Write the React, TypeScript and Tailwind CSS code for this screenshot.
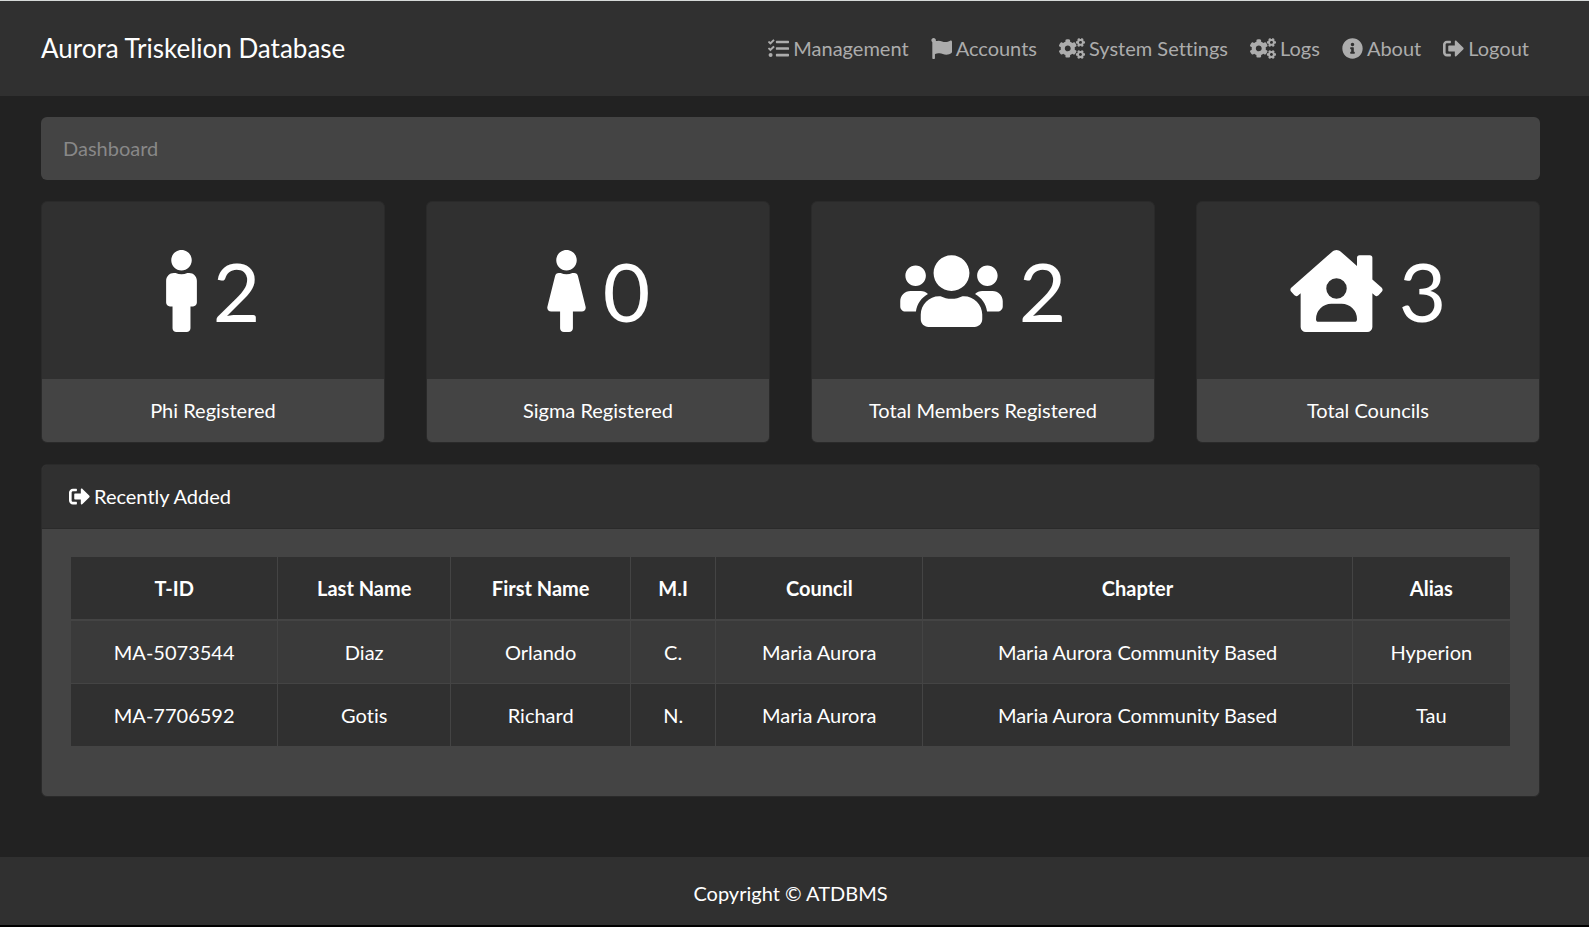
import type { IconType } from "react-icons";
import {
  FaCogs,
  FaFemale,
  FaFlag,
  FaHouseUser,
  FaInfoCircle,
  FaMale,
  FaSignOutAlt,
  FaTasks,
  FaUsers,
} from "react-icons/fa";

type Link = { label: string; icon: IconType; width: string };
type Stat = { label: string; value: number; icon: IconType; width: string };

const links: Link[] = [
  { label: "Management", icon: FaTasks, width: "w-[21px]" },
  { label: "Accounts", icon: FaFlag, width: "w-[21px]" },
  { label: "System Settings", icon: FaCogs, width: "w-[26px]" },
  { label: "Logs", icon: FaCogs, width: "w-[26px]" },
  { label: "About", icon: FaInfoCircle, width: "w-[21px]" },
  { label: "Logout", icon: FaSignOutAlt, width: "w-[21px]" },
];

const stats: Stat[] = [
  { label: "Phi Registered", value: 2, icon: FaMale, width: "w-[31px]" },
  { label: "Sigma Registered", value: 0, icon: FaFemale, width: "w-[41px]" },
  { label: "Total Members Registered", value: 2, icon: FaUsers, width: "w-[103px]" },
  { label: "Total Councils", value: 3, icon: FaHouseUser, width: "w-[93px]" },
];

const columns = [
  { name: "T-ID", width: "w-[14.4%]" },
  { name: "Last Name", width: "w-[12%]" },
  { name: "First Name", width: "w-[12.5%]" },
  { name: "M.I", width: "w-[5.9%]" },
  { name: "Council", width: "w-[14.4%]" },
  { name: "Chapter", width: "w-[29.8%]" },
  { name: "Alias", width: "w-[11%]" },
];

const members = [
  ["MA-5073544", "Diaz", "Orlando", "C.", "Maria Aurora", "Maria Aurora Community Based", "Hyperion"],
  ["MA-7706592", "Gotis", "Richard", "N.", "Maria Aurora", "Maria Aurora Community Based", "Tau"],
];

function NavBar() {
  return (
    <header className="flex flex-wrap items-center justify-between border-t border-[#d5d9d8] bg-[#303030] py-8 pr-[60px] pl-[41px]">
      <a href="#" className="text-[26px] leading-[31px]">
        Aurora Triskelion Database
      </a>
      <nav className="flex flex-wrap items-center gap-[22px] text-[#acacac]">
        {links.map(({ label, icon: Icon, width }) => (
          <a key={label} href="#" className="flex items-center gap-1">
            <Icon className={`h-[21px] ${width}`} />
            {label}
          </a>
        ))}
      </nav>
    </header>
  );
}

function StatCard({ label, value, icon: Icon, width }: Stat) {
  return (
    <section className="rounded-md border border-[#2a2a2a] bg-[#303030] text-center">
      <div className="flex items-center justify-center gap-4 px-7 py-[27px] text-[82px] leading-[123px]">
        <Icon className={`h-[82px] ${width}`} />
        <span>{value}</span>
      </div>
      <h2 className="rounded-b-[5px] bg-[#444444] py-4">{label}</h2>
    </section>
  );
}

function RecentlyAdded() {
  return (
    <section className="mt-[21px] rounded-md border border-[#2a2a2a] bg-[#444444]">
      <h2 className="flex items-center gap-1 rounded-t-[5px] border-b border-[#2a2a2a] bg-[#303030] px-[27px] py-4">
        <FaSignOutAlt className="h-[21px] w-[21px]" />
        Recently Added
      </h2>
      <div className="px-7 pt-[27px] pb-[49px]">
        <table className="w-full border-collapse bg-[#303030] text-center leading-[30px]">
          <thead>
            <tr>
              {columns.map(({ name, width }) => (
                <th
                  key={name}
                  scope="col"
                  className={`border border-b-2 border-[#444444] px-2 py-4 font-bold ${width}`}
                >
                  {name}
                </th>
              ))}
            </tr>
          </thead>
          <tbody>
            {members.map((row) => (
              <tr key={row[0]} className="odd:bg-[#3a3a3a]">
                {row.map((cell, i) => (
                  <td key={columns[i].name} className="border border-[#444444] px-2 py-4">
                    {cell}
                  </td>
                ))}
              </tr>
            ))}
          </tbody>
        </table>
      </div>
    </section>
  );
}

export default function App() {
  return (
    <div className="flex min-h-screen flex-col border-b-2 border-black bg-[#222222] font-['Lato',sans-serif] text-[20px] leading-[31px] text-white [font-variant-ligatures:none]">
      <NavBar />
      <main className="flex-1 pt-[21px] pr-[49px] pb-[60px] pl-[41px]">
        <ol className="mb-[21px] rounded-md bg-[#444444] px-[22px] py-4 text-[#888888]">
          <li>Dashboard</li>
        </ol>
        <div className="grid grid-cols-1 gap-[41px] md:grid-cols-2 xl:grid-cols-4">
          {stats.map((stat) => (
            <StatCard key={stat.label} {...stat} />
          ))}
        </div>
        <RecentlyAdded />
      </main>
      <footer className="bg-[#303030] pt-[21px] pr-[49px] pb-4 pl-[41px] text-center">
        Copyright © ATDBMS
      </footer>
    </div>
  );
}
